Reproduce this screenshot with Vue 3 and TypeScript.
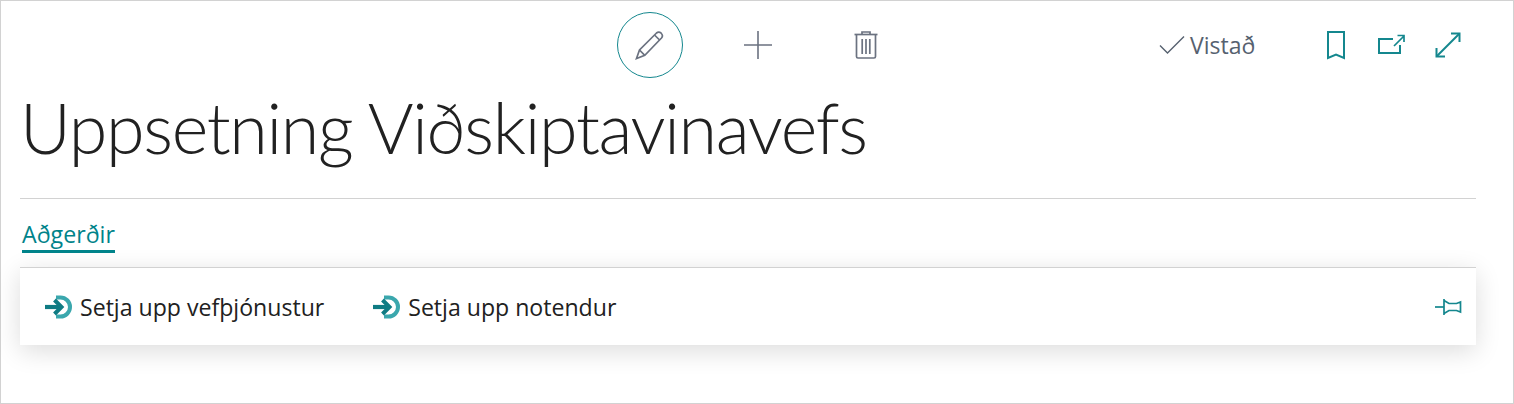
<template>
  <div class="page">
    <header class="topbar">
      <div class="actions">
        <button class="icon-btn active" aria-label="Breyta">
          <svg width="30" height="30" viewBox="0 0 30 30" fill="none" stroke="#6b7280" stroke-width="1.7">
            <path d="M1.5 28.5 L4.5 20 L21.5 3 Q23.8 1 26.2 3.2 Q28.5 5.8 26.5 8 L9.8 25.3 Z" />
            <path d="M4.5 20 L9.8 25.3" />
            <path d="M19.5 5 L24.6 10" />
          </svg>
        </button>
        <button class="icon-btn" aria-label="Nýtt">
          <svg width="30" height="30" viewBox="0 0 30 30" fill="none" stroke="#6b7280" stroke-width="1.6">
            <path d="M15 1 V29 M1 15 H29" />
          </svg>
        </button>
        <button class="icon-btn" aria-label="Eyða">
          <svg width="26" height="30" viewBox="0 0 26 30" fill="none" stroke="#6b7280" stroke-width="1.7">
            <path d="M1.5 4.5 H24.5" />
            <path d="M9 4 V2 H17 V4" />
            <path d="M3.5 5 V26.5 Q3.5 28 5 28 H21 Q22.5 28 22.5 26.5 V5" />
            <path d="M9.2 9 V24 M13 9 V24 M16.8 9 V24" />
          </svg>
        </button>
      </div>
      <div class="status">
        <svg width="26" height="20" viewBox="0 0 26 20" fill="none" stroke="#56616f" stroke-width="1.4">
          <path d="M1 10.5 L8.5 18 L25 1.5" />
        </svg>
        <span>Vistað</span>
      </div>
      <div class="tools">
        <svg class="bookmark" width="20" height="29" viewBox="0 0 20 29" fill="none" stroke="#14878e" stroke-width="2">
          <path d="M2 1 H18 V27 L10 23.5 L2 27 Z" />
        </svg>
        <svg width="28" height="22" viewBox="0 0 28 22" fill="none" stroke="#14878e" stroke-width="2">
          <path d="M16 5 H2 V19 H23 V11" />
          <path d="M17 12 L26.5 2.5 M20.5 1.5 H27 V8" stroke-width="1.7" />
        </svg>
        <svg width="26" height="26" viewBox="0 0 26 26" fill="none" stroke="#14878e" stroke-width="2">
          <path d="M2 24 L24 2" />
          <path d="M16 1.5 H24.5 V10 M1.5 16 V24.5 H10" />
        </svg>
      </div>
    </header>

    <h1 class="title">Uppsetning Viðskiptavinavefs</h1>

    <nav class="tabs">
      <a class="tab">Aðgerðir</a>
    </nav>

    <section class="card">
      <a v-for="item in items" :key="item" class="item">
        <svg width="28" height="24" viewBox="0 0 28 24" fill="none">
          <path d="M11 2.5 H15.5 A9.5 9.5 0 0 1 15.5 21.5 H11" stroke="#3aa7ad" stroke-width="4" />
          <path d="M0 12 H16" stroke="#0f7b83" stroke-width="4.2" />
          <path d="M9.5 5 L16.5 12 L9.5 19" stroke="#0f7b83" stroke-width="4" />
        </svg>
        <span>{{ item }}</span>
      </a>
      <svg class="pin" width="29" height="18" viewBox="0 0 29 18" fill="none" stroke="#14878e" stroke-width="1.7">
        <path d="M2 9 H11" />
        <path d="M11 1 V17 M11 2.5 L16 5.5 H23.5 L27.5 4 V14 L23.5 12.5 H16 L11 15.5" />
      </svg>
    </section>
  </div>
</template>

<script setup lang="ts">
const items: string[] = ['Setja upp vefþjónustur', 'Setja upp notendur']
</script>

<style>
html,
body {
  margin: 0;
  background: #fff;
}
</style>

<style scoped>
.page {
  box-sizing: border-box;
  width: 1514px;
  height: 404px;
  padding: 0 37px 0 19px;
  border: 1px solid #d2d2d2;
  font-family: "Open Sans", "Noto Sans", sans-serif;
  color: #212121;
}

.topbar {
  display: flex;
  align-items: center;
  height: 88px;
  padding-left: 597px;
}

.actions {
  display: flex;
  gap: 42px;
}

.icon-btn {
  display: flex;
  align-items: center;
  justify-content: center;
  width: 66px;
  height: 66px;
  padding: 0;
  border: 1px solid transparent;
  border-radius: 50%;
  background: none;
}

.icon-btn.active {
  border-color: #14878e;
}

.status {
  display: flex;
  align-items: center;
  gap: 5px;
  margin-left: 260px;
  font-size: 23px;
  color: #56616f;
}

.tools {
  display: flex;
  align-items: center;
  gap: 30px;
  margin-left: 71px;
}

.bookmark {
  margin-right: 1px;
}

.title {
  margin: 0;
  height: 109px;
  border-bottom: 1px solid #d2d2d2;
  font-family: Lato, "Open Sans", sans-serif;
  font-size: 70px;
  font-weight: 300;
  letter-spacing: -1.32px;
  line-height: 76px;
  white-space: nowrap;
}

.tabs {
  display: flex;
  height: 68px;
  padding: 0 2px;
}

.tab {
  align-self: flex-start;
  margin-top: 20px;
  padding-bottom: 1px;
  border-bottom: 3px solid #00838a;
  font-size: 23.2px;
  line-height: 30px;
  color: #00838a;
  text-decoration: none;
}

.card {
  display: flex;
  align-items: center;
  gap: 49px;
  height: 78px;
  box-sizing: border-box;
  padding: 0 14px 0 25px;
  border-top: 1px solid #d2d2d2;
  box-shadow: 0 6px 26px rgba(0, 0, 0, 0.14);
  background: #fff;
}

.item {
  display: flex;
  align-items: center;
  gap: 7px;
  font-size: 23.1px;
  color: #212121;
}

.pin {
  margin-left: auto;
}
</style>
